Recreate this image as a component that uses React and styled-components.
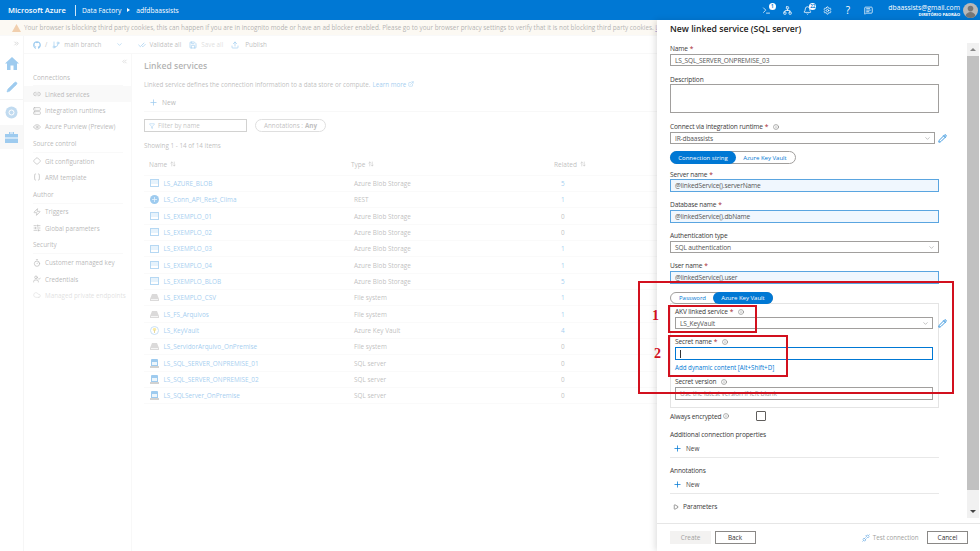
import React from 'react';
import styled, { createGlobalStyle } from 'styled-components';
import {
  ChevronDown, ChevronsLeft, ChevronsRight, Pencil, Plus, Info, Filter, ExternalLink,
  GitBranch, CheckCheck, Save, Upload, Link2, Server, Eye, Diamond, Braces, Zap, SlidersHorizontal,
  Timer, UserCheck, Cloud, Settings, Bell, Unplug, Play, ArrowUpDown, Terminal, Network, MessageSquareText,
} from 'lucide-react';
import { FaGithub } from 'react-icons/fa';

const GlobalStyle = createGlobalStyle`
  html, body { margin: 0; padding: 0; height: 100%; overflow: hidden; background: #fff; }
  body { font-family: "Open Sans", "Noto Sans", sans-serif; color: #323130; }
  * { box-sizing: border-box; }
`;

const Page = styled.div`
  position: relative;
  width: 980px;
  height: 551px;
  display: flex;
  flex-direction: column;
  overflow: hidden;
`;

const TopBar = styled.header`
  height: 20px;
  flex: none;
  background: #0078d4;
  color: #fff;
  display: flex;
  align-items: center;
  padding-left: 8px;
  font-size: 7.6px;
`;

const Brand = styled.span`
  font-weight: 600;
  padding-right: 9px;
  margin-right: 6px;
  border-right: 1px solid #cfe6f7;
  line-height: 11px;
`;

const Crumb = styled.span`
  font-size: 6.7px;
  font-weight: 500;
`;

const CrumbArrow = styled.span`
  margin: 0 6px;
  width: 0;
  height: 0;
  border-left: 3px solid #fff;
  border-top: 2.5px solid transparent;
  border-bottom: 2.5px solid transparent;
`;

const TopIcons = styled.div`
  margin-left: auto;
  display: flex;
  align-items: center;
  gap: 10.3px;
  margin-right: 15px;
`;

const TopIcon = styled.span`
  position: relative;
  display: flex;
  width: 10px;
  justify-content: center;
  font-size: 10px;
  line-height: 10px;
`;

const Badge = styled.span`
  position: absolute;
  top: -3px;
  right: -4px;
  min-width: 7px;
  height: 7px;
  padding: 0 1px;
  border-radius: 4px;
  background: #fff;
  color: #0078d4;
  font-size: 4.5px;
  line-height: 7px;
  text-align: center;
  font-weight: 700;
`;

const Account = styled.div`
  text-align: right;
  margin-right: 3px;
`;

const Email = styled.div`
  font-size: 6.8px;
  line-height: 9px;
`;

const Directory = styled.div`
  font-size: 4.2px;
  line-height: 6px;
  font-weight: 700;
`;

const Avatar = styled.svg`
  width: 15px;
  height: 15px;
  margin-right: 2px;
  flex: none;
`;

const Body = styled.div`
  flex: 1;
  display: flex;
  min-height: 0;
`;

const Behind = styled.div`
  position: relative;
  flex: 1;
  min-width: 0;
  display: flex;
  flex-direction: column;
`;

const Dimmer = styled.div`
  position: absolute;
  inset: 0;
  background: rgba(255, 255, 255, 0.62);
  pointer-events: none;
`;

const Banner = styled.div`
  height: 16px;
  flex: none;
  background: #f7efdf;
  display: flex;
  align-items: center;
  padding-left: 12px;
  font-size: 6.35px;
  white-space: pre;
  overflow: hidden;
  border-bottom: 1px solid #eee;
  color: #323130;
`;

const BannerLink = styled.span`
  color: #5c2d91;
  text-decoration: underline;
`;

const WarnIcon = styled.svg`
  width: 9px;
  height: 8px;
  margin-right: 3px;
  flex: none;
`;

const Workspace = styled.div`
  flex: 1;
  display: flex;
  min-height: 0;
`;

const Rail = styled.nav`
  width: 24px;
  flex: none;
  border-right: 1px solid #e6e6e6;
  display: flex;
  flex-direction: column;
  align-items: center;
  color: #0078d4;
  background: #fff;
`;

const RailToggle = styled.div`
  height: 15px;
  align-self: stretch;
  display: flex;
  justify-content: flex-end;
  align-items: center;
  padding-right: 3px;
  color: #555;
`;

const RailItem = styled.div`
  height: 24.6px;
  align-self: stretch;
  display: flex;
  align-items: center;
  justify-content: center;
  background: ${(p) => (p.$active ? '#ececec' : 'transparent')};
  ${(p) => p.$rule && 'border-bottom: 1px solid #e2e2e2;'}
`;

const Content = styled.div`
  flex: 1;
  min-width: 0;
  display: flex;
  flex-direction: column;
`;

const Toolbar = styled.div`
  height: 18px;
  flex: none;
  border-bottom: 1px solid #ececec;
  display: flex;
  align-items: center;
  padding-left: 9px;
  font-size: 6.3px;
  color: #555;
`;

const ToolItem = styled.span`
  display: inline-flex;
  align-items: center;
  gap: ${(p) => p.$inner || 4}px;
  margin-right: ${(p) => p.$gap || 8}px;
  color: ${(p) => (p.$muted ? '#aaa' : '#555')};
  svg { color: #0078d4; }
`;

const Split = styled.div`
  flex: 1;
  display: flex;
  min-height: 0;
`;

const Side = styled.aside`
  width: 108px;
  flex: none;
  border-right: 1px solid #ececec;
`;

const Collapse = styled.div`
  height: 15px;
  display: flex;
  justify-content: flex-end;
  align-items: center;
  padding-right: 3px;
  color: #777;
`;

const SideHead = styled.div`
  margin: 0 8px 0 9px;
  height: ${(p) => p.$h || 17}px;
  display: flex;
  align-items: center;
  font-size: 6.4px;
  color: #444;
  border-bottom: 1px solid #eee;
`;

const SideItem = styled.div`
  height: 16.4px;
  display: flex;
  align-items: center;
  gap: 4px;
  padding-left: 9px;
  font-size: 6.3px;
  white-space: nowrap;
  background: ${(p) => (p.$active ? '#eeeeee' : 'transparent')};
  color: ${(p) => (p.$off ? '#b0b0b0' : '#444')};
`;

const Main = styled.main`
  flex: 1;
  min-width: 0;
  padding: 0 0 0 12px;
`;

const Heading = styled.h2`
  margin: 0;
  padding-top: 1px;
  height: 22px;
  display: flex;
  align-items: center;
  font-size: 8.6px;
  font-weight: 600;
  color: #333;
`;

const Lead = styled.p`
  margin: 4px 0 0;
  font-size: 6.25px;
  line-height: 10px;
  color: #555;
  white-space: nowrap;
  display: flex;
  align-items: center;
  gap: 2px;
`;

const LinkText = styled.span`
  color: #0078d4;
`;

const NewRow = styled.div`
  height: 18px;
  margin: 4px 0 0;
  padding-left: 5px;
  border-bottom: 1px solid #ededed;
  display: flex;
  align-items: center;
  gap: 4px;
  font-size: 6.6px;
  color: #444;
  svg { color: #0078d4; }
`;

const FilterRow = styled.div`
  margin-top: 7px;
  display: flex;
  gap: 8px;
`;

const FilterBox = styled.div`
  width: 103px;
  height: 13px;
  border: 1px solid #8a8886;
  display: flex;
  align-items: center;
  gap: 3px;
  padding-left: 4px;
  font-size: 6.3px;
  color: #666;
  svg { color: #0078d4; }
`;

const Pill = styled.div`
  width: 71px;
  height: 13px;
  border: 1px solid #aaa;
  border-radius: 7px;
  display: flex;
  align-items: center;
  justify-content: center;
  font-size: 6.3px;
  color: #555;
  b { margin-left: 2px; font-weight: 700; }
`;

const Showing = styled.div`
  margin-top: 9px;
  font-size: 6.3px;
  line-height: 10px;
  color: #555;
`;

const Row = styled.div`
  display: grid;
  grid-template-columns: 202px 203px 1fr;
  height: 16.33px;
  align-items: center;
  border-bottom: 1px solid #f2f2f2;
  font-size: 6.4px;
  padding-left: 5px;
  color: #555;
`;

const HeadRow = styled(Row)`
  height: 20.8px;
  padding-bottom: 1.8px;
  margin-top: 4px;
  font-size: 6.5px;
`;

const SortCell = styled.span`
  display: flex;
  align-items: center;
  gap: 3px;
`;

const NameCell = styled.span`
  display: flex;
  align-items: center;
  gap: 4.5px;
  color: #0078d4;
  padding-left: 1px;
`;

const TypeCell = styled.span`
  padding-left: 3px;
`;

const RelatedCell = styled.span`
  padding-left: 7px;
  color: ${(p) => (p.$linked ? '#0078d4' : '#555')};
`;

const Panel = styled.section`
  width: 323px;
  flex: none;
  background: #fff;
  box-shadow: -2px 0 6px rgba(0, 0, 0, 0.12);
  display: flex;
  flex-direction: column;
  z-index: 2;
`;

const PanelScroll = styled.div`
  flex: 1;
  min-height: 0;
  display: flex;
`;

const Form = styled.form`
  flex: 1;
  min-width: 0;
  padding: 3px 0 0 13px;
`;

const PanelTitle = styled.h1`
  margin: 0;
  font-size: 8.7px;
  font-weight: 600;
  line-height: 13px;
  color: #252423;
`;

const Scrollbar = styled.div`
  width: 12px;
  flex: none;
  margin: 23px 1px 5px 0;
  background: #f1f1f1;
  display: flex;
  flex-direction: column;
`;

const ScrollArrow = styled.div`
  height: 13px;
  flex: none;
  display: flex;
  align-items: center;
  justify-content: center;
  &::after {
    content: "";
    border-left: 3px solid transparent;
    border-right: 3px solid transparent;
    ${(p) => (p.$down ? 'border-top: 3px solid #444;' : 'border-bottom: 3px solid #888;')}
  }
`;

const ScrollThumb = styled.div`
  flex: 1;
  background: #c1c1c1;
  margin-bottom: 15px;
`;

const Field = styled.div`
  width: ${(p) => p.$w || 269}px;
  margin-top: ${(p) => p.$top ?? 0}px;
`;

const Label = styled.div`
  display: flex;
  align-items: center;
  gap: 5px;
  height: ${(p) => p.$h || 11}px;
  font-size: 6.6px;
  letter-spacing: -0.15px;
  font-weight: 500;
  color: #3b3a39;
  white-space: nowrap;
  em { color: #a4262c; font-style: normal; margin-left: -3px; }
`;

const Input = styled.div`
  height: ${(p) => p.$h || 13}px;
  padding-left: 4px;
  font-size: 6.6px;
  letter-spacing: -0.15px;
  display: flex;
  align-items: center;
  white-space: nowrap;
  overflow: hidden;
  border: 1px solid ${(p) => (p.$focus ? '#0078d4' : '#a19f9d')};
  background: ${(p) => (p.$blue ? '#f0f7fe' : '#fff')};
  color: ${(p) => (p.$faint ? '#999' : '#555')};
  ${(p) => p.$blue && 'border-color: #5aa5e0;'}
  ${(p) => p.$focus && 'border-width: 1.5px;'}
`;

const Caret = styled.span`
  width: 1px;
  height: 8px;
  background: #333;
`;

const Area = styled(Input)`
  height: 29px;
`;

const SelectRow = styled.div`
  display: flex;
  align-items: center;
  gap: ${(p) => p.$gap || 3}px;
  margin-right: -${(p) => p.$over || 8}px;
`;

const Select = styled(Input)`
  flex: 1;
  justify-content: space-between;
  height: 12px;
  padding-right: 3px;
  svg { color: #999; }
`;

const EditIcon = styled(Pencil)`
  color: #0078d4;
  flex: none;
`;

const Toggle = styled.div`
  display: flex;
  width: max-content;
  height: ${(p) => p.$h || 13}px;
  margin-top: ${(p) => p.$top || 0}px;
  border: 1px solid #a19f9d;
  border-radius: 7px;
  font-size: 6px;
  font-weight: 500;
  position: relative;
  z-index: 1;
`;

const ToggleOption = styled.span`
  display: flex;
  align-items: center;
  justify-content: center;
  width: ${(p) => p.$w}px;
  border-radius: 7px;
  margin: -1px;
  background: ${(p) => (p.$on ? '#0078d4' : 'transparent')};
  color: ${(p) => (p.$on ? '#fff' : '#0078d4')};
`;

const VaultBox = styled.div`
  width: 269px;
  margin-top: -1px;
  border: 1px solid #e4e4e4;
  padding: 2px 5px 7px 4px;
`;

const Hint = styled.div`
  font-size: 6.2px;
  line-height: 9px;
  margin-top: 3px;
  color: #0078d4;
`;

const CheckRow = styled.div`
  margin-top: 3px;
  display: flex;
  align-items: center;
  height: 10px;
  font-size: 6.6px;
  letter-spacing: -0.15px;
  font-weight: 500;
  color: #3b3a39;
`;

const CheckLabel = styled.span`
  display: flex;
  align-items: center;
  gap: 2px;
  width: 86px;
`;

const CheckBox = styled.span`
  width: 10px;
  height: 10px;
  border: 1px solid #605e5c;
  border-radius: 1px;
`;

const AddRow = styled.div`
  width: 269px;
  height: 19px;
  padding-left: 3px;
  border-bottom: 1px solid #e8e8e8;
  display: flex;
  align-items: center;
  gap: 4px;
  font-size: 6.4px;
  color: #444;
  svg { color: #0078d4; }
`;

const Expander = styled.div`
  margin-top: 7px;
  padding-left: 3px;
  display: flex;
  align-items: center;
  gap: 4px;
  height: 11px;
  font-size: 6.6px;
  letter-spacing: -0.15px;
  font-weight: 500;
  color: #3b3a39;
`;

const Footer = styled.footer`
  height: 28px;
  flex: none;
  border-top: 1px solid #e6e6e6;
  padding: 7px 12px 0 13px;
  display: flex;
  gap: 3.5px;
  align-items: flex-start;
`;

const Button = styled.span`
  width: 41px;
  height: 13px;
  display: flex;
  align-items: center;
  justify-content: center;
  font-size: 6.4px;
  border: 1px solid ${(p) => (p.$off ? '#f3f2f1' : '#8a8886')};
  background: ${(p) => (p.$off ? '#f3f2f1' : '#fff')};
  color: ${(p) => (p.$off ? '#a19f9d' : '#323130')};
`;

const TestLink = styled.span`
  margin-left: auto;
  margin-right: 5px;
  height: 13px;
  display: flex;
  align-items: center;
  gap: 3px;
  font-size: 6.2px;
  color: #a19f9d;
  svg { color: #71afe5; }
`;

const Mark = styled.div`
  position: absolute;
  left: ${(p) => p.$x}px;
  top: ${(p) => p.$y}px;
  width: ${(p) => p.$w}px;
  height: ${(p) => p.$h}px;
  border: 2px solid #d2101e;
  z-index: 3;
  pointer-events: none;
`;

const MarkNumber = styled.span`
  position: absolute;
  left: ${(p) => p.$x}px;
  top: ${(p) => p.$y}px;
  font-family: "Liberation Serif", serif;
  font-weight: 700;
  font-size: 14px;
  line-height: 14px;
  color: #d2101e;
  z-index: 3;
`;

const BlobIcon = () => (
  <svg width="9" height="8" viewBox="0 0 9 8">
    <rect width="9" height="8" fill="#0078d4" opacity=".75" />
    <rect x="1" y="1" width="7" height="4" fill="#bfe0f7" />
    <rect x="1" y="5" width="7" height="2" fill="#fff" />
  </svg>
);
const RestIcon = () => (
  <svg width="9" height="9" viewBox="0 0 9 9">
    <circle cx="4.5" cy="4.5" r="4.5" fill="#0078d4" />
    <path d="M2 4.5h5M4.5 2v5" stroke="#bfe0f7" strokeWidth=".8" />
  </svg>
);
const FileIcon = () => (
  <svg width="9" height="7" viewBox="0 0 9 7">
    <path d="M2 0h5l2 5v2H0V5z" fill="#a19f9d" />
    <rect x="1" y="5" width="7" height="1" fill="#e4e4e4" />
  </svg>
);
const VaultIcon = () => (
  <svg width="9" height="9" viewBox="0 0 9 9">
    <circle cx="4.5" cy="4.5" r="4" fill="#fff" stroke="#71afe5" />
    <circle cx="4.5" cy="3.4" r="1.7" fill="#f2c811" />
    <rect x="4" y="4" width="1" height="3" fill="#c19c00" />
  </svg>
);
const SqlIcon = () => (
  <svg width="9" height="9" viewBox="0 0 9 9">
    <rect x="1" y="0" width="7" height="8" rx="1" fill="#0078d4" />
    <rect x="2" y="3" width="5" height="3" fill="#cfe6f7" />
    <rect x="0" y="7" width="9" height="2" fill="#8a8886" />
  </svg>
);

const services = [
  ['LS_AZURE_BLOB', 'Azure Blob Storage', 5, BlobIcon],
  ['LS_Conn_API_Rest_Clima', 'REST', 1, RestIcon],
  ['LS_EXEMPLO_01', 'Azure Blob Storage', 0, BlobIcon],
  ['LS_EXEMPLO_02', 'Azure Blob Storage', 0, BlobIcon],
  ['LS_EXEMPLO_03', 'Azure Blob Storage', 1, BlobIcon],
  ['LS_EXEMPLO_04', 'Azure Blob Storage', 1, BlobIcon],
  ['LS_EXEMPLO_BLOB', 'Azure Blob Storage', 5, BlobIcon],
  ['LS_EXEMPLO_CSV', 'File system', 1, FileIcon],
  ['LS_FS_Arquivos', 'File system', 1, FileIcon],
  ['LS_KeyVault', 'Azure Key Vault', 4, VaultIcon],
  ['LS_ServidorArquivo_OnPremise', 'File system', 0, FileIcon],
  ['LS_SQL_SERVER_ONPREMISE_01', 'SQL server', 0, SqlIcon],
  ['LS_SQL_SERVER_ONPREMISE_02', 'SQL server', 0, SqlIcon],
  ['LS_SQLServer_OnPremise', 'SQL server', 0, SqlIcon],
];

const Side1 = [
  ['Linked services', Link2, true],
  ['Integration runtimes', Server],
  ['Azure Purview (Preview)', Eye],
];

const Req = () => <em>*</em>;
const Tip = () => <Info size={6} strokeWidth={1.5} />;

export default function App() {
  return (
    <Page>
      <GlobalStyle />
      <TopBar>
        <Brand>Microsoft Azure</Brand>
        <Crumb>Data Factory</Crumb>
        <CrumbArrow />
        <Crumb>adfdbaassists</Crumb>
        <TopIcons>
          <TopIcon><Terminal size={9} /><Badge>1</Badge></TopIcon>
          <TopIcon><Network size={9} /></TopIcon>
          <TopIcon><Bell size={9} /><Badge>22</Badge></TopIcon>
          <TopIcon><Settings size={9} /></TopIcon>
          <TopIcon>?</TopIcon>
          <TopIcon><MessageSquareText size={9} /></TopIcon>
        </TopIcons>
        <Account>
          <Email>dbaassists@gmail.com</Email>
          <Directory>DIRETÓRIO PADRÃO</Directory>
        </Account>
        <Avatar viewBox="0 0 15 15">
          <circle cx="7.5" cy="7.5" r="7.5" fill="#b8b8b8" />
          <circle cx="7.5" cy="5.6" r="2.8" fill="#777" />
          <path d="M2.5 13c.8-3 3-4 5-4s4.2 1 5 4a7.5 7.5 0 0 1-10 0z" fill="#777" />
        </Avatar>
      </TopBar>
      <Body>
        <Behind>
          <Banner>
            <WarnIcon viewBox="0 0 9 8"><path d="M4.5 0 9 8H0z" fill="#d9822b" /></WarnIcon>
            Your browser is blocking third party cookies, this can happen if you are in incognito mode or have an ad blocker enabled. Please go to your browser privacy settings to verify that it is not blocking third party cookies. <BannerLink>Le</BannerLink>
          </Banner>
          <Workspace>
            <Rail>
              <RailToggle><ChevronsRight size={7} /></RailToggle>
              <RailItem>
                <svg width="14" height="13" viewBox="0 0 14 13"><path d="M7 0 14 6.5h-2V13H8.5V8.5h-3V13H2V6.500H0z" fill="#0078d4" /></svg>
              </RailItem>
              <RailItem $rule><Pencil size={12} fill="#0078d4" strokeWidth={1} /></RailItem>
              <RailItem>
                <svg width="13" height="13" viewBox="0 0 13 13"><circle cx="6.5" cy="6.5" r="6" fill="#5ea0d8" /><circle cx="6.5" cy="6.5" r="2.5" fill="none" stroke="#fff" /></svg>
              </RailItem>
              <RailItem $active>
                <svg width="13" height="12" viewBox="0 0 13 12"><path d="M4 3V1h5v2h4v9H0V3z" fill="#0078d4" /><path d="M5 2h3" stroke="#fff" /><path d="M0 7h13" stroke="#fff" /></svg>
              </RailItem>
            </Rail>
            <Content>
              <Toolbar>
                <ToolItem $gap={5}><FaGithub size={8} /> /</ToolItem>
                <ToolItem $gap={15}><GitBranch size={8} /> main branch</ToolItem>
                <ToolItem $gap={15}><ChevronDown size={7} /></ToolItem>
                <ToolItem $inner={3}><CheckCheck size={8} /> Validate all</ToolItem>
                <ToolItem $muted><Save size={8} /> Save all</ToolItem>
                <ToolItem $inner={6}><Upload size={8} /> Publish</ToolItem>
              </Toolbar>
              <Split>
                <Side>
                  <Collapse><ChevronsLeft size={7} /></Collapse>
                  <SideHead>Connections</SideHead>
                  {Side1.map(([label, Icon, active]) => (
                    <SideItem key={label} $active={active}><Icon size={8} />{label}</SideItem>
                  ))}
                  <SideHead $h={17.7}>Source control</SideHead>
                  <SideItem><Diamond size={8} />Git configuration</SideItem>
                  <SideItem><Braces size={8} />ARM template</SideItem>
                  <SideHead $h={18}>Author</SideHead>
                  <SideItem><Zap size={8} />Triggers</SideItem>
                  <SideItem><SlidersHorizontal size={8} />Global parameters</SideItem>
                  <SideHead $h={18}>Security</SideHead>
                  <SideItem><Timer size={8} />Customer managed key</SideItem>
                  <SideItem><UserCheck size={8} />Credentials</SideItem>
                  <SideItem $off><Cloud size={8} />Managed private endpoints</SideItem>
                </Side>
                <Main>
                  <Heading>Linked services</Heading>
                  <Lead>
                    Linked service defines the connection information to a data store or compute.
                    <LinkText>Learn more</LinkText>
                    <LinkText><ExternalLink size={6} /></LinkText>
                  </Lead>
                  <NewRow><Plus size={9} />New</NewRow>
                  <FilterRow>
                    <FilterBox><Filter size={6} />Filter by name</FilterBox>
                    <Pill>Annotations : <b>Any</b></Pill>
                  </FilterRow>
                  <Showing>Showing 1 - 14 of 14 items</Showing>
                  <HeadRow>
                    <SortCell>Name <ArrowUpDown size={6} /></SortCell>
                    <SortCell>Type <ArrowUpDown size={6} /></SortCell>
                    <SortCell>Related <ArrowUpDown size={6} /></SortCell>
                  </HeadRow>
                  {services.map(([name, type, related, Icon]) => (
                    <Row key={name}>
                      <NameCell><Icon />{name}</NameCell>
                      <TypeCell>{type}</TypeCell>
                      <RelatedCell $linked={related > 0}>{related}</RelatedCell>
                    </Row>
                  ))}
                </Main>
              </Split>
            </Content>
          </Workspace>
          <Dimmer />
        </Behind>
        <Panel>
          <PanelScroll>
            <Form>
              <PanelTitle>New linked service (SQL server)</PanelTitle>
              <Field $top={7}>
                <Label>Name <Req /></Label>
                <Input $h={12}>LS_SQL_SERVER_ONPREMISE_03</Input>
              </Field>
              <Field $top={8}>
                <Label $h={10}>Description</Label>
                <Area />
              </Field>
              <Field $top={8}>
                <Label>Connect via integration runtime <Req /> <Tip /></Label>
                <SelectRow>
                  <Select>IR-dbaassists<ChevronDown size={7} /></Select>
                  <EditIcon size={9} />
                </SelectRow>
              </Field>
              <Toggle $top={7}>
                <ToggleOption $on $w={66}>Connection string</ToggleOption>
                <ToggleOption $w={62}>Azure Key Vault</ToggleOption>
              </Toggle>
              <Field $top={5}>
                <Label $h={10}>Server name <Req /></Label>
                <Input $blue>@linkedService().serverName</Input>
              </Field>
              <Field $top={7}>
                <Label>Database name <Req /></Label>
                <Input $blue>@linkedService().dbName</Input>
              </Field>
              <Field $top={7}>
                <Label>Authentication type</Label>
                <Select>SQL authentication<ChevronDown size={7} /></Select>
              </Field>
              <Field $top={7}>
                <Label>User name <Req /></Label>
                <Input $blue>@linkedService().user</Input>
              </Field>
              <Toggle $top={8} $h={12}>
                <ToggleOption $w={45}>Password</ToggleOption>
                <ToggleOption $on $w={60}>Azure Key Vault</ToggleOption>
              </Toggle>
              <VaultBox>
                <Field $w={258}>
                  <Label>AKV linked service <Req /> <Tip /></Label>
                  <SelectRow $gap={5} $over={14}>
                    <Select>LS_KeyVault<ChevronDown size={7} /></Select>
                    <EditIcon size={9} />
                  </SelectRow>
                </Field>
                <Field $w={258} $top={7}>
                  <Label>Secret name <Req /> <Tip /></Label>
                  <Input $focus><Caret /></Input>
                  <Hint>Add dynamic content [Alt+Shift+D]</Hint>
                </Field>
                <Field $w={258} $top={4}>
                  <Label>Secret version <Tip /></Label>
                  <Input $faint>Use the latest version if left blank</Input>
                </Field>
              </VaultBox>
              <CheckRow>
                <CheckLabel>Always encrypted <Tip /></CheckLabel>
                <CheckBox />
              </CheckRow>
              <Field $top={8}>
                <Label $h={10}>Additional connection properties</Label>
              </Field>
              <AddRow><Plus size={9} />New</AddRow>
              <Field $top={7}>
                <Label $h={10}>Annotations</Label>
              </Field>
              <AddRow><Plus size={9} />New</AddRow>
              <Expander><Play size={6} />Parameters</Expander>
            </Form>
            <Scrollbar>
              <ScrollArrow />
              <ScrollThumb />
              <ScrollArrow $down />
            </Scrollbar>
          </PanelScroll>
          <Footer>
            <Button $off>Create</Button>
            <Button>Back</Button>
            <TestLink><Unplug size={8} />Test connection</TestLink>
            <Button>Cancel</Button>
          </Footer>
        </Panel>
      </Body>
      <Mark $x={638} $y={281} $w={316} $h={113} />
      <Mark $x={668} $y={305} $w={89} $h={28} />
      <Mark $x={668} $y={335} $w={120} $h={42} />
      <MarkNumber $x={652} $y={309}>1</MarkNumber>
      <MarkNumber $x={654} $y={347}>2</MarkNumber>
    </Page>
  );
}
